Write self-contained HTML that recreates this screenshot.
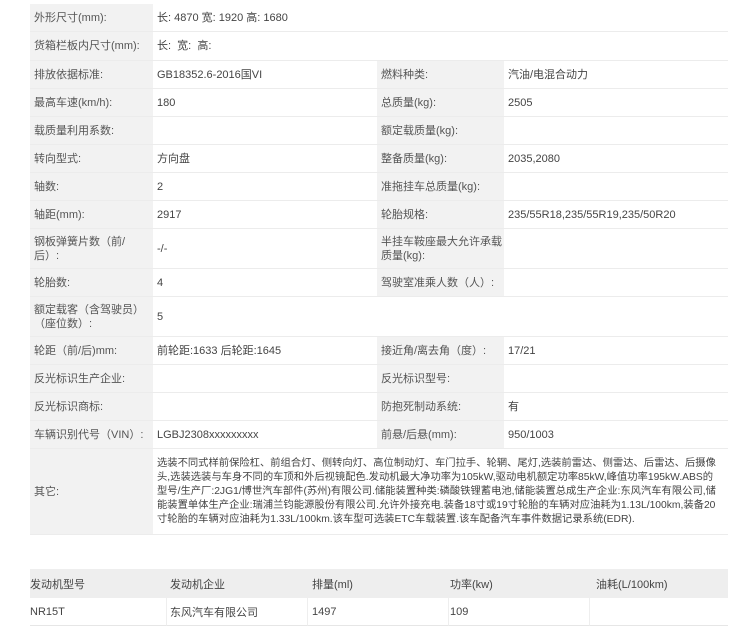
<!DOCTYPE html>
<html><head><meta charset="utf-8"><style>
body{margin:0;width:756px;height:636px;background:#fff;position:relative;overflow:hidden;font-family:"Liberation Sans","Noto Sans CJK SC",sans-serif;font-size:11px;color:#444}
.c{position:absolute;box-sizing:border-box;display:flex;align-items:center;padding-left:4px;border-bottom:1px solid #ececec;line-height:14px}
.l{background:#f2f2f2;color:#555}
.t{position:absolute;white-space:nowrap;font-size:10.3px;color:#444;left:157px}
.h{position:absolute;top:569px;height:29px;background:#eeeeee;display:flex;align-items:center;font-size:11px;color:#444}
.d{position:absolute;top:598px;height:28px;display:flex;align-items:center;font-size:11px;border-bottom:1px solid #e6e6e6;border-right:1px solid #eee;box-sizing:border-box}
</style></head><body>
<div class="c l" style="left:30px;top:4px;width:123px;height:28px">外形尺寸(mm):</div>
<div class="c" style="left:153px;top:4px;width:575px;height:28px">长: 4870 宽: 1920 高: 1680</div>
<div class="c l" style="left:30px;top:32px;width:123px;height:29px">货箱栏板内尺寸(mm):</div>
<div class="c" style="left:153px;top:32px;width:575px;height:29px">长:&nbsp; 宽:&nbsp; 高:</div>

<div class="c l" style="left:30px;top:61px;width:123px;height:28px">排放依据标准:</div>
<div class="c" style="left:153px;top:61px;width:224px;height:28px">GB18352.6-2016国VI</div>
<div class="c l" style="left:377px;top:61px;width:127px;height:28px">燃料种类:</div>
<div class="c" style="left:504px;top:61px;width:224px;height:28px">汽油/电混合动力</div>

<div class="c l" style="left:30px;top:89px;width:123px;height:28px">最高车速(km/h):</div>
<div class="c" style="left:153px;top:89px;width:224px;height:28px">180</div>
<div class="c l" style="left:377px;top:89px;width:127px;height:28px">总质量(kg):</div>
<div class="c" style="left:504px;top:89px;width:224px;height:28px">2505</div>

<div class="c l" style="left:30px;top:117px;width:123px;height:28px">载质量利用系数:</div>
<div class="c" style="left:153px;top:117px;width:224px;height:28px"></div>
<div class="c l" style="left:377px;top:117px;width:127px;height:28px">额定载质量(kg):</div>
<div class="c" style="left:504px;top:117px;width:224px;height:28px"></div>

<div class="c l" style="left:30px;top:145px;width:123px;height:28px">转向型式:</div>
<div class="c" style="left:153px;top:145px;width:224px;height:28px">方向盘</div>
<div class="c l" style="left:377px;top:145px;width:127px;height:28px">整备质量(kg):</div>
<div class="c" style="left:504px;top:145px;width:224px;height:28px">2035,2080</div>

<div class="c l" style="left:30px;top:173px;width:123px;height:28px">轴数:</div>
<div class="c" style="left:153px;top:173px;width:224px;height:28px">2</div>
<div class="c l" style="left:377px;top:173px;width:127px;height:28px">准拖挂车总质量(kg):</div>
<div class="c" style="left:504px;top:173px;width:224px;height:28px"></div>

<div class="c l" style="left:30px;top:201px;width:123px;height:28px">轴距(mm):</div>
<div class="c" style="left:153px;top:201px;width:224px;height:28px">2917</div>
<div class="c l" style="left:377px;top:201px;width:127px;height:28px">轮胎规格:</div>
<div class="c" style="left:504px;top:201px;width:224px;height:28px">235/55R18,235/55R19,235/50R20</div>

<div class="c l" style="left:30px;top:229px;width:123px;height:40px">钢板弹簧片数（前/<br>后）:</div>
<div class="c" style="left:153px;top:229px;width:224px;height:40px">-/-</div>
<div class="c l" style="left:377px;top:229px;width:127px;height:40px">半挂车鞍座最大允许承载<br>质量(kg):</div>
<div class="c" style="left:504px;top:229px;width:224px;height:40px"></div>

<div class="c l" style="left:30px;top:269px;width:123px;height:28px">轮胎数:</div>
<div class="c" style="left:153px;top:269px;width:224px;height:28px">4</div>
<div class="c l" style="left:377px;top:269px;width:127px;height:28px">驾驶室准乘人数（人）:</div>
<div class="c" style="left:504px;top:269px;width:224px;height:28px"></div>

<div class="c l" style="left:30px;top:297px;width:123px;height:40px">额定载客（含驾驶员）<br>（座位数）:</div>
<div class="c" style="left:153px;top:297px;width:575px;height:40px">5</div>

<div class="c l" style="left:30px;top:337px;width:123px;height:28px">轮距（前/后)mm:</div>
<div class="c" style="left:153px;top:337px;width:224px;height:28px">前轮距:1633 后轮距:1645</div>
<div class="c l" style="left:377px;top:337px;width:127px;height:28px">接近角/离去角（度）:</div>
<div class="c" style="left:504px;top:337px;width:224px;height:28px">17/21</div>

<div class="c l" style="left:30px;top:365px;width:123px;height:28px">反光标识生产企业:</div>
<div class="c" style="left:153px;top:365px;width:224px;height:28px"></div>
<div class="c l" style="left:377px;top:365px;width:127px;height:28px">反光标识型号:</div>
<div class="c" style="left:504px;top:365px;width:224px;height:28px"></div>

<div class="c l" style="left:30px;top:393px;width:123px;height:28px">反光标识商标:</div>
<div class="c" style="left:153px;top:393px;width:224px;height:28px"></div>
<div class="c l" style="left:377px;top:393px;width:127px;height:28px">防抱死制动系统:</div>
<div class="c" style="left:504px;top:393px;width:224px;height:28px">有</div>

<div class="c l" style="left:30px;top:421px;width:123px;height:28px">车辆识别代号（VIN）:</div>
<div class="c" style="left:153px;top:421px;width:224px;height:28px">LGBJ2308xxxxxxxxx</div>
<div class="c l" style="left:377px;top:421px;width:127px;height:28px">前悬/后悬(mm):</div>
<div class="c" style="left:504px;top:421px;width:224px;height:28px">950/1003</div>

<div class="c l" style="left:30px;top:449px;width:123px;height:86px">其它:</div>
<div class="c" style="left:153px;top:449px;width:575px;height:86px"></div>
<div class="t" style="top:454px">选装不同式样前保险杠、前组合灯、侧转向灯、高位制动灯、车门拉手、轮辋、尾灯,选装前雷达、侧雷达、后雷达、后摄像</div>
<div class="t" style="top:468px">头,选装选装与车身不同的车顶和外后视镜配色.发动机最大净功率为105kW,驱动电机额定功率85kW,峰值功率195kW.ABS的</div>
<div class="t" style="top:482px">型号/生产厂:2JG1/博世汽车部件(苏州)有限公司.储能装置种类:磷酸铁锂蓄电池,储能装置总成生产企业:东风汽车有限公司,储</div>
<div class="t" style="top:496px">能装置单体生产企业:瑞浦兰钧能源股份有限公司.允许外接充电.装备18寸或19寸轮胎的车辆对应油耗为1.13L/100km,装备20</div>
<div class="t" style="top:510px">寸轮胎的车辆对应油耗为1.33L/100km.该车型可选装ETC车载装置.该车配备汽车事件数据记录系统(EDR).</div>

<div class="h" style="left:30px;width:698px"></div>
<div class="h" style="left:30px;width:137px">发动机型号</div>
<div class="h" style="left:170px;width:130px">发动机企业</div>
<div class="h" style="left:312px;width:130px">排量(ml)</div>
<div class="h" style="left:450px;width:130px">功率(kw)</div>
<div class="h" style="left:596px;width:130px">油耗(L/100km)</div>
<div class="d" style="left:30px;width:137px">NR15T</div>
<div class="d" style="left:167px;width:141px;padding-left:3px">东风汽车有限公司</div>
<div class="d" style="left:308px;width:141px;padding-left:4px">1497</div>
<div class="d" style="left:449px;width:141px;padding-left:1px">109</div>
<div class="d" style="left:590px;width:138px;border-right:none"></div>
</body></html>
